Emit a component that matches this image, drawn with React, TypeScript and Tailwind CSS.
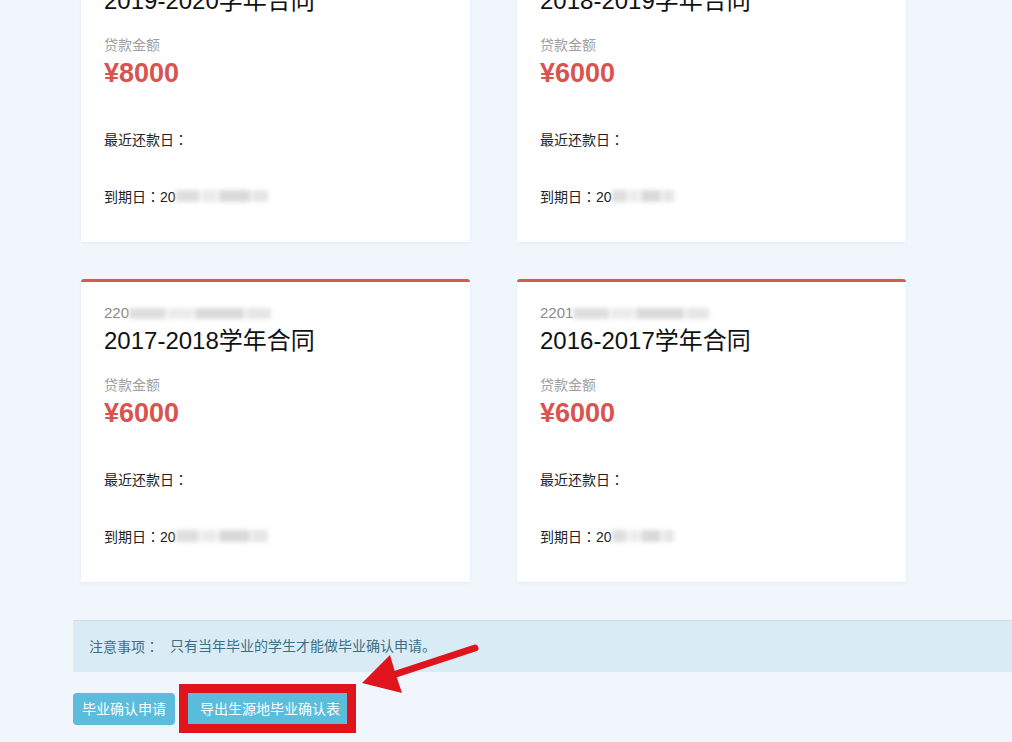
import React from 'react';

interface Contract {
    account: string;
    accountBlur: number;
    title: string;
    amount: string;
    dateBlur: number;
}

const contracts: Contract[] = [
    { account: '220', accountBlur: 142, title: '2019-2020学年合同', amount: '¥8000', dateBlur: 92 },
    { account: '220', accountBlur: 142, title: '2018-2019学年合同', amount: '¥6000', dateBlur: 62 },
    { account: '220', accountBlur: 142, title: '2017-2018学年合同', amount: '¥6000', dateBlur: 92 },
    { account: '2201', accountBlur: 136, title: '2016-2017学年合同', amount: '¥6000', dateBlur: 62 },
];

// centred full-width colon (JP glyph centres it like the original font)
const Colon = () => <span style={{ fontFamily: '"Noto Sans CJK JP", sans-serif' }}>：</span>;

function Blur({ width, height = 10 }: { width: number; height?: number }) {
    return (
        <span className="inline-flex items-center align-middle" style={{ width }}>
            <span className="flex w-full gap-[2px] blur-[2px]" style={{ height }}>
                <span className="flex-[3] bg-[#dedede]" />
                <span className="flex-[2] bg-[#ebebeb]" />
                <span className="flex-[4] bg-[#dadada]" />
                <span className="flex-[2] bg-[#e6e6e6]" />
            </span>
        </span>
    );
}

function ContractCard({ c }: { c: Contract }) {
    return (
        <div className="h-[303px] bg-white border-t-[3px] border-[#d45a55] rounded-t-[3px] shadow-[0_1px_3px_rgba(120,150,190,0.12)] px-[23px] pt-[21px]">
            <div className="text-[15px] leading-[20px] text-[#8a8a8a] flex items-center">
                <span>{c.account}</span>
                <Blur width={c.accountBlur} height={11} />
            </div>
            <div className="mt-[3px] text-[24px] leading-[30px] text-[#111]">{c.title}</div>
            <div className="mt-[20px] text-[14px] leading-[18px] text-[#a0a0a0]">贷款金额</div>
            <div className="mt-[4px] text-[27px] leading-[30px] font-bold text-[#d9534f]">{c.amount}</div>
            <div className="mt-[42px] h-[18px] text-[14px] leading-[18px] text-[#222]">
                最近还款日<Colon />
            </div>
            <div className="mt-[39px] h-[18px] text-[14px] leading-[18px] text-[#222] flex items-center">
                <span>到期日<Colon />20</span>
                <Blur width={c.dateBlur} height={12} />
            </div>
        </div>
    );
}

export default function App() {
    return (
        <div
            className="relative w-full h-[742px] overflow-hidden bg-[#f1f6fd]"
            style={{ fontFamily: '"Liberation Sans", "Noto Sans CJK SC", sans-serif' }}
        >
            {/* Cards (page scrolled) */}
            <div className="-mt-[61px] ml-[81px] w-[825px] grid grid-cols-2 gap-x-[47px] gap-y-[37px]">
                {contracts.map((c, i) => (
                    <ContractCard key={i} c={c} />
                ))}
            </div>

            {/* Notice */}
            <div className="mt-[38px] ml-[73px] mr-[-20px] h-[52px] bg-[#d9ebf5] border-t border-[#c4dfe9] flex items-center pl-[16px] text-[14px] text-[#3d6f86]">
                <span>注意事项<Colon /></span>
                <span className="ml-[11px]">只有当年毕业的学生才能做毕业确认申请。</span>
            </div>

            {/* Buttons */}
            <div className="mt-[21px] ml-[73px] flex items-center">
                <button className="h-[32px] w-[102px] rounded-[4px] bg-[#5bbcdb] text-white text-[14px] flex items-center justify-center">
                    毕业确认申请
                </button>
                <div className="relative ml-[13px]">
                    <button className="h-[32px] w-[164px] bg-[#5bbcdb] text-white text-[14px] pl-[12px] text-left">
                        导出生源地毕业确认表
                    </button>
                    <div className="absolute -left-[9px] -top-[9px] w-[177px] h-[49px] border-[9px] border-[#e0141c]" />
                </div>
            </div>

            {/* Annotation arrow */}
            <svg className="absolute left-[355px] top-[635px]" width="130" height="65" viewBox="0 0 130 65">
                <line x1="38" y1="40" x2="120" y2="13" stroke="#e0141c" strokeWidth="7" strokeLinecap="round" />
                <polygon points="7,48 35,20 40,37 47,58" fill="#e0141c" />
            </svg>
        </div>
    );
}
